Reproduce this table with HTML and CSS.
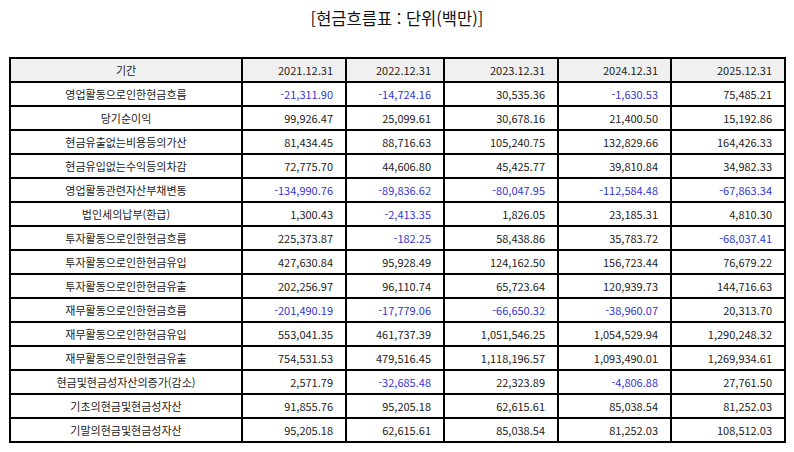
FILE: index.html
```html
<!DOCTYPE html>
<html lang="ko">
<head>
<meta charset="utf-8">
<title>현금흐름표</title>
<link rel="stylesheet" href="styles.css">
</head>
<body>
<div class="page">
  <h1 class="title">[현금흐름표 : 단위(백만)]</h1>
  <table class="cf">
    <colgroup>
      <col class="c-label"><col class="c-a"><col class="c-b"><col class="c-c"><col class="c-d"><col class="c-e">
    </colgroup>
    <thead>
      <tr><th class="lbl">기간</th><th>2021.12.31</th><th>2022.12.31</th><th>2023.12.31</th><th>2024.12.31</th><th>2025.12.31</th></tr>
    </thead>
    <tbody>
      <tr><td class="lbl">영업활동으로인한현금흐름</td><td class="neg">-21,311.90</td><td class="neg">-14,724.16</td><td>30,535.36</td><td class="neg">-1,630.53</td><td>75,485.21</td></tr>
      <tr><td class="lbl">당기순이익</td><td>99,926.47</td><td>25,099.61</td><td>30,678.16</td><td>21,400.50</td><td>15,192.86</td></tr>
      <tr><td class="lbl">현금유출없는비용등의가산</td><td>81,434.45</td><td>88,716.63</td><td>105,240.75</td><td>132,829.66</td><td>164,426.33</td></tr>
      <tr><td class="lbl">현금유입없는수익등의차감</td><td>72,775.70</td><td>44,606.80</td><td>45,425.77</td><td>39,810.84</td><td>34,982.33</td></tr>
      <tr><td class="lbl">영업활동관련자산부채변동</td><td class="neg">-134,990.76</td><td class="neg">-89,836.62</td><td class="neg">-80,047.95</td><td class="neg">-112,584.48</td><td class="neg">-67,863.34</td></tr>
      <tr><td class="lbl">법인세의납부(환급)</td><td>1,300.43</td><td class="neg">-2,413.35</td><td>1,826.05</td><td>23,185.31</td><td>4,810.30</td></tr>
      <tr><td class="lbl">투자활동으로인한현금흐름</td><td>225,373.87</td><td class="neg">-182.25</td><td>58,438.86</td><td>35,783.72</td><td class="neg">-68,037.41</td></tr>
      <tr><td class="lbl">투자활동으로인한현금유입</td><td>427,630.84</td><td>95,928.49</td><td>124,162.50</td><td>156,723.44</td><td>76,679.22</td></tr>
      <tr><td class="lbl">투자활동으로인한현금유출</td><td>202,256.97</td><td>96,110.74</td><td>65,723.64</td><td>120,939.73</td><td>144,716.63</td></tr>
      <tr><td class="lbl">재무활동으로인한현금흐름</td><td class="neg">-201,490.19</td><td class="neg">-17,779.06</td><td class="neg">-66,650.32</td><td class="neg">-38,960.07</td><td>20,313.70</td></tr>
      <tr><td class="lbl">재무활동으로인한현금유입</td><td>553,041.35</td><td>461,737.39</td><td>1,051,546.25</td><td>1,054,529.94</td><td>1,290,248.32</td></tr>
      <tr><td class="lbl">재무활동으로인한현금유출</td><td>754,531.53</td><td>479,516.45</td><td>1,118,196.57</td><td>1,093,490.01</td><td>1,269,934.61</td></tr>
      <tr><td class="lbl">현금및현금성자산의증가(감소)</td><td>2,571.79</td><td class="neg">-32,685.48</td><td>22,323.89</td><td class="neg">-4,806.88</td><td>27,761.50</td></tr>
      <tr><td class="lbl">기초의현금및현금성자산</td><td>91,855.76</td><td>95,205.18</td><td>62,615.61</td><td>85,038.54</td><td>81,252.03</td></tr>
      <tr><td class="lbl">기말의현금및현금성자산</td><td>95,205.18</td><td>62,615.61</td><td>85,038.54</td><td>81,252.03</td><td>108,512.03</td></tr>
    </tbody>
  </table>
</div>
</body>
</html>
```
FILE: styles.css
```css
html, body {
  margin: 0;
  padding: 0;
  background: #ffffff;
}

.page {
  padding: 6px 9px 0 9px;
  font-family: "Noto Sans CJK KR", "Noto Sans", sans-serif;
  color: #222222;
}

.title {
  margin: 0;
  height: 51px;
  font-size: 16.5px;
  font-weight: 400;
  line-height: 24px;
  text-align: center;
  color: #111111;
}

.cf {
  width: 777px;
  table-layout: fixed;
  border-collapse: separate;
  border-spacing: 0;
  border-top: 2px solid #000000;
  border-left: 2px solid #000000;
  font-size: 11px;
}

.c-label { width: 232px; }
.c-a { width: 104px; }
.c-b { width: 98px; }
.c-c { width: 114px; }
.c-d { width: 113px; }
.c-e { width: 114px; }

.cf th,
.cf td {
  box-sizing: border-box;
  height: 24px;
  padding: 0 12px 0 4px;
  border-right: 2px solid #000000;
  border-bottom: 2px solid #000000;
  text-align: right;
  font-weight: 400;
  line-height: 14px;
  white-space: nowrap;
  color: #222222;
}

.cf th {
  background: #f0f0f0;
}

.cf .lbl {
  text-align: center;
  padding: 0 4px;
}

.cf .neg {
  color: #3535d0;
}
```
